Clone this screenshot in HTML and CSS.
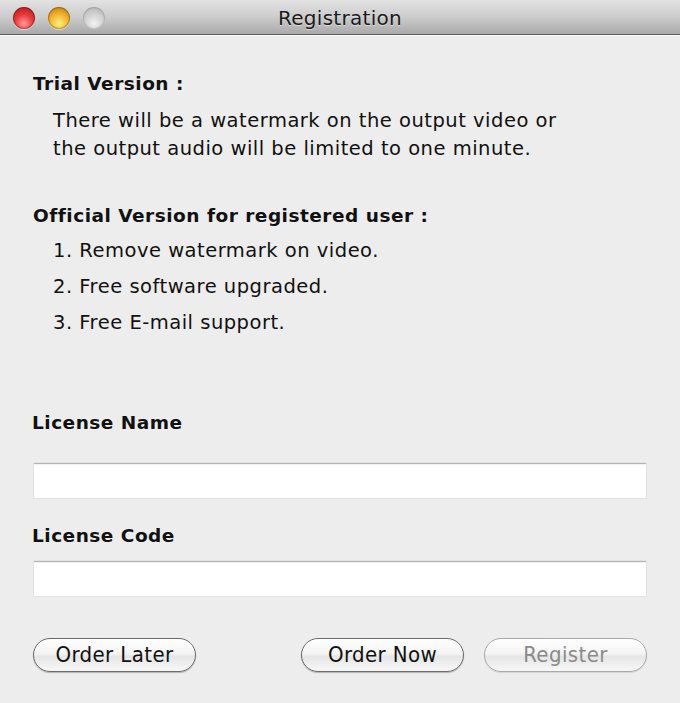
FILE: index.html
```html
<!DOCTYPE html>
<html>
<head>
<meta charset="utf-8">
<title>Registration</title>
<link rel="stylesheet" href="styles.css">
</head>
<body>
<div class="window">
  <div class="titlebar">
    <div class="lights">
      <span class="light red"></span>
      <span class="light yellow"></span>
      <span class="light gray"></span>
    </div>
    <div class="title">Registration</div>
  </div>
  <div class="content">
    <div class="heading trial">Trial Version :</div>
    <p class="para">There will be a watermark on the output video or<br>the output audio will be limited to one minute.</p>
    <div class="heading official">Official Version for registered user :</div>
    <ol class="list">
      <li>1. Remove watermark on video.</li>
      <li>2. Free software upgraded.</li>
      <li>3. Free E-mail support.</li>
    </ol>
    <div class="heading lname">License Name</div>
    <div class="field"></div>
    <div class="heading lcode">License Code</div>
    <div class="field field2"></div>
    <div class="buttons">
      <button class="btn">Order Later</button>
      <div class="spacer"></div>
      <button class="btn">Order Now</button>
      <button class="btn disabled">Register</button>
    </div>
  </div>
</div>
</body>
</html>
```
FILE: styles.css
```css
html, body {
  margin: 0;
  padding: 0;
  background: #ededed;
}
.window {
  width: 680px;
  height: 703px;
  background: #ededed;
  font-family: "DejaVu Sans", "Liberation Sans", sans-serif;
  color: #111;
  overflow: hidden;
  display: flex;
  flex-direction: column;
}
.titlebar {
  height: 34px;
  flex: none;
  position: relative;
  background: linear-gradient(#e2e2e2, #cccccc 50%, #a9a9a9);
  border-bottom: 1px solid #5f5f5f;
  box-shadow: 0 1px 0 #f8f8f8;
  display: flex;
  align-items: center;
  justify-content: center;
}
.lights {
  position: absolute;
  left: 13px;
  top: 7px;
  display: flex;
  gap: 13px;
}
.light {
  width: 22px;
  height: 22px;
  border-radius: 50%;
  box-shadow: inset 0 0 0 1px rgba(0,0,0,0.25), 0 1px 0 rgba(255,255,255,0.5);
}
.red {
  background: radial-gradient(circle at 50% 75%, #ff9a9a 0%, #e8393a 45%, #a8141a 100%);
}
.yellow {
  background: radial-gradient(circle at 50% 75%, #fff27a 0%, #f3b631 45%, #b8720c 100%);
}
.gray {
  background: radial-gradient(circle at 50% 75%, #f2f2f2 0%, #d0d0d0 50%, #a9a9a9 100%);
  box-shadow: inset 0 0 0 1px rgba(0,0,0,0.12);
}
.title {
  font-size: 20px;
  color: #1a1a1a;
  letter-spacing: 0.3px;
  text-shadow: 0 1px 0 rgba(255,255,255,0.5);
  margin-top: 1px;
}
.content {
  padding: 35px 33px 0 33px;
  display: flex;
  flex-direction: column;
}
.heading {
  font-weight: bold;
  font-size: 18.5px;
  letter-spacing: 0.5px;
  line-height: 28px;
  height: 28px;
}
.para {
  margin: 9px 0 0 20px;
  font-size: 19.5px;
  letter-spacing: 0.5px;
  line-height: 28px;
}
.official {
  margin-top: 39px;
}
.list {
  list-style: none;
  margin: 3px 0 0 20px;
  padding: 0;
  font-size: 19.5px;
  letter-spacing: 0.5px;
  line-height: 36px;
}
.lname {
  margin-top: 68px;
  margin-left: -1px;
}
.field {
  margin-top: 26px;
  margin-left: 1px;
  margin-right: 1px;
  height: 34px;
  background: #fff;
  border-top: 1px solid #b4b4b4;
  box-shadow: 0 0 0 1px #e2e2e2, inset 0 1px 1px rgba(0,0,0,0.06);
}
.lcode {
  margin-top: 24px;
  margin-left: -1px;
}
.field2 {
  margin-top: 11px;
}
.buttons {
  margin-top: 42px;
  display: flex;
  align-items: center;
  gap: 20px;
}
.spacer {
  flex: 1;
}
.btn {
  width: 163px;
  height: 34px;
  border-radius: 17px;
  border: 1px solid #6a6a6a;
  background: linear-gradient(#ffffff, #f4f4f4 45%, #e6e6e6 55%, #f7f7f7);
  box-shadow: 0 1px 1px rgba(0,0,0,0.25), inset 0 1px 0 #fff;
  font-family: "DejaVu Sans Condensed", "DejaVu Sans", sans-serif;
  font-size: 22px;
  letter-spacing: 0.4px;
  color: #111;
  padding: 0;
  line-height: 30px;
}
.btn.disabled {
  border-color: #a9a9a9;
  color: #8a8a8a;
  box-shadow: 0 1px 1px rgba(0,0,0,0.1), inset 0 1px 0 #fff;
}
```
